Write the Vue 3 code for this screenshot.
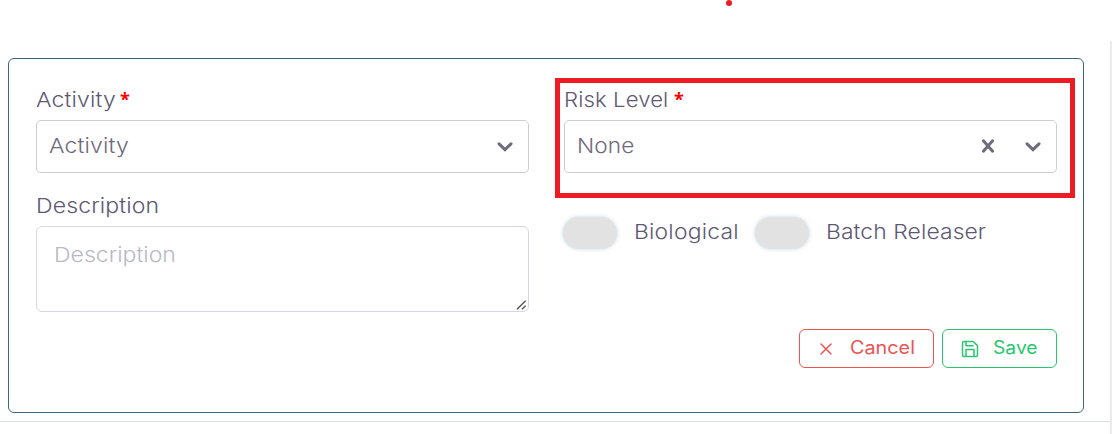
<script setup>
import { ref } from 'vue'

const description = ref('')
const switches = ref([
  { key: 'biological', label: 'Biological', on: false },
  { key: 'batch', label: 'Batch Releaser', on: false },
])
</script>

<template>
  <div class="page">
    <main class="content">
      <form class="card" @submit.prevent>
        <div class="column">
          <label class="label l-activity"><span class="wide">Activity</span><b class="star">*</b></label>
          <div class="select">
            <span class="value"><span class="wide">Activity</span></span>
            <svg class="icon chevron" viewBox="0 0 16 12"><path d="M2 2.8 L8 8.6 L14 2.8" /></svg>
          </div>
          <label class="label second"><span class="wide">Description</span></label>
          <div class="area">
            <textarea v-model="description" class="textarea" placeholder="Description"></textarea>
            <svg class="grip" viewBox="0 0 11 10"><path d="M1 9.2 L9.6 .8 M6 9.2 L9.6 5.8" /></svg>
          </div>
        </div>

        <div class="column">
          <div class="risk">
            <label class="label l-risk"><span class="wide">Risk Level</span><b class="star">*</b></label>
            <div class="select">
              <span class="value none"><span class="wide">None</span></span>
              <svg class="icon clear" viewBox="0 0 14 14"><path d="M2.4 1.8 L11.6 12.2 M11.6 1.8 L2.4 12.2" /></svg>
              <svg class="icon chevron" viewBox="0 0 16 12"><path d="M2 2.8 L8 8.6 L14 2.8" /></svg>
            </div>
            <div class="highlight"></div>
          </div>
          <div class="switches">
            <div v-for="s in switches" :key="s.key" class="switch" :class="s.key">
              <span class="track" @click="s.on = !s.on"></span>
              <span class="switch-label wide">{{ s.label }}</span>
            </div>
          </div>
          <div class="actions">
            <button class="btn cancel" type="button">
              <svg viewBox="0 0 18 18"><path d="M4 4 L14 14 M14 4 L4 14" /></svg>
              <span class="wide">Cancel</span>
            </button>
            <button class="btn save" type="submit">
              <svg viewBox="0 0 18 18">
                <path d="M3 1.5 H12.2 L16.5 5.6 V15 Q16.5 16.5 15 16.5 H3 Q1.5 16.5 1.5 15 V3 Q1.5 1.5 3 1.5 Z M5 1.5 V5.8 H12 M5 16.5 V9.5 H13 V16.5" />
              </svg>
              <span class="wide">Save</span>
            </button>
          </div>
        </div>
      </form>
    </main>
    <aside class="edge"></aside>
    <i class="dot"></i>
  </div>
</template>

<style>
body {
  background: #fff;
}
</style>

<style scoped>
.page {
  position: relative;
  display: flex;
  width: 1112px;
  height: 434px;
  overflow: hidden;
  box-sizing: border-box;
  font-family: Inter, "Open Sans", sans-serif;
  font-size: 20.4px;
  font-weight: 300;
  color: #5e5873;
}
.page * {
  box-sizing: border-box;
}
.wide {
  display: inline-block;
  transform: scaleX(1.13);
  transform-origin: left;
  letter-spacing: 0.1px;
}
.content {
  width: 1110px;
  height: 422px;
  padding: 58px 26px 0 8px;
  border-bottom: 1px solid #d9dfe5;
}
.edge {
  width: 2px;
  margin-top: 41px;
  background: #ebebeb;
}
.dot {
  position: absolute;
  left: 726px;
  top: 0;
  width: 6px;
  height: 6px;
  border-radius: 50%;
  background: #ed1c24;
}
.card {
  display: grid;
  grid-template-columns: 493px 493px;
  gap: 35px;
  width: 1076px;
  height: 355px;
  padding: 26px 26px 0 27px;
  border: 1px solid #3b6680;
  border-radius: 6px;
}
.label {
  display: flex;
  height: 30px;
  line-height: 30px;
  margin-bottom: 5px;
  white-space: nowrap;
}
.l-activity .wide {
  width: 84px;
}
.l-risk .wide {
  width: 110px;
  transform: scaleX(1.085);
}
.second {
  margin-top: 18px;
}
.star {
  font-family: "Open Sans", sans-serif;
  font-size: 18px;
  font-weight: 700;
  line-height: 28px;
  color: #f00;
}
.select {
  display: flex;
  align-items: center;
  height: 53px;
  padding: 0 15px 2px 12px;
  border: 1px solid #ccc;
  border-radius: 5px;
}
.value {
  flex: 1;
  color: #6e6b7b;
}
.none .wide {
  transform: scaleX(1.11);
}
.icon {
  fill: none;
  stroke: #6e6b7b;
  stroke-width: 3;
  stroke-linecap: round;
  position: relative;
  top: 0.5px;
}
.chevron {
  width: 16px;
  height: 12px;
  top: 1px;
}
.clear {
  width: 14px;
  height: 14px;
  margin-right: 30px;
}
.area {
  position: relative;
  height: 86px;
  border: 1px solid #d8d6de;
  border-radius: 6px;
}
.textarea {
  display: block;
  width: 434px;
  height: 84px;
  padding: 13px 15px;
  border: 0;
  outline: none;
  resize: none;
  background: transparent;
  color: #6e6b7b;
  font: inherit;
  line-height: 30px;
  letter-spacing: 0;
  transform: scaleX(1.13);
  transform-origin: left;
}
.textarea::placeholder {
  color: #b9b9c3;
  opacity: 1;
}
.grip {
  position: absolute;
  right: 1px;
  bottom: 1px;
  width: 11px;
  height: 10px;
  fill: none;
  stroke: #555;
  stroke-width: 1.4;
}
.risk {
  position: relative;
}
.highlight {
  position: absolute;
  left: -9px;
  top: -7px;
  width: 520px;
  height: 120px;
  border: 5px solid #ed1c24;
  pointer-events: none;
}
.switches {
  display: flex;
  margin: 44px 0 0 -1px;
}
.switch {
  display: flex;
  height: 32px;
  width: 192px;
}
.batch {
  width: 240px;
}
.track {
  width: 54px;
  height: 32px;
  margin-right: 16.5px;
  border-radius: 16px;
  background: #e2e2e2;
  box-shadow: 0 0 4px #c4d7e0;
}
.switch-label {
  line-height: 30px;
  white-space: nowrap;
}
.switch .wide {
  transform: scaleX(1.12);
}
.biological .wide {
  letter-spacing: 0.2px;
}
.actions {
  display: flex;
  justify-content: flex-end;
  gap: 8px;
  margin-top: 80px;
}
.btn {
  display: flex;
  align-items: center;
  width: 135px;
  height: 39px;
  padding: 0 0 2px 17px;
  border: 1px solid;
  border-radius: 6px;
  background: #fff;
  font: 400 18px Inter, "Open Sans", sans-serif;
}
.btn .wide {
  letter-spacing: 0;
  transform: scaleX(1.1);
}
.btn svg {
  position: relative;
  top: 1.5px;
  width: 18px;
  height: 18px;
  margin-right: 14.5px;
  fill: none;
  stroke: currentColor;
  stroke-width: 1.5;
  stroke-linecap: round;
  stroke-linejoin: round;
}
.cancel {
  color: #ea5455;
}
.save {
  width: 115px;
  padding-left: 18px;
  color: #28c76f;
}
.save .wide {
  margin-left: -1px;
  transform: scaleX(1.07);
}
</style>
